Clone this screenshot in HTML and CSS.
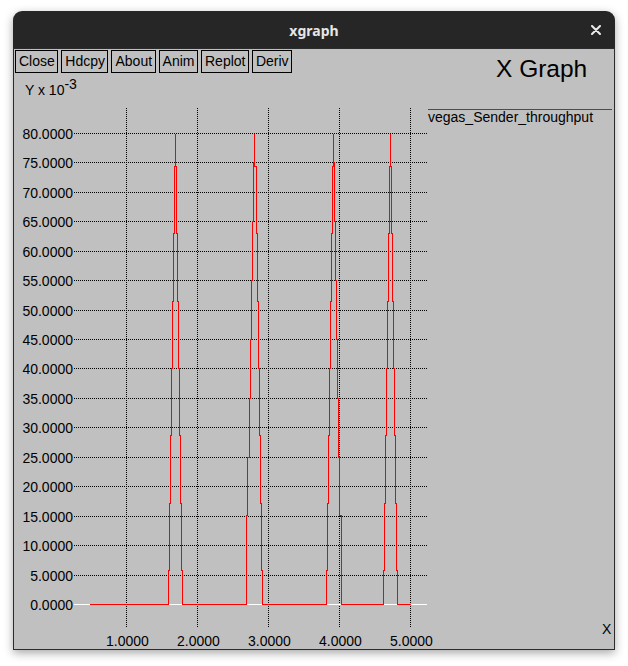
FILE: index.html
```html
<!DOCTYPE html>
<html>
<head>
<meta charset="utf-8">
<title>xgraph</title>
<link rel="stylesheet" href="styles.css">
</head>
<body>
<div class="window">
  <div class="titlebar">
    <span class="title">xgraph</span>
    <svg class="close" width="10" height="10" viewBox="0 0 10 10"><path d="M1 1 L9 9 M9 1 L1 9" stroke="#ececec" stroke-width="2" stroke-linecap="round"/></svg>
  </div>
  <div class="content">
    <svg class="plot" width="600" height="600" viewBox="14 49 600 600">
      <g class="hgrid" stroke="#000" stroke-width="1" stroke-dasharray="1 1" shape-rendering="crispEdges">
        <line x1="74" x2="427" y1="575.5" y2="575.5"/>
        <line x1="74" x2="427" y1="545.5" y2="545.5"/>
        <line x1="74" x2="427" y1="516.5" y2="516.5"/>
        <line x1="74" x2="427" y1="486.5" y2="486.5"/>
        <line x1="74" x2="427" y1="457.5" y2="457.5"/>
        <line x1="74" x2="427" y1="427.5" y2="427.5"/>
        <line x1="74" x2="427" y1="398.5" y2="398.5"/>
        <line x1="74" x2="427" y1="368.5" y2="368.5"/>
        <line x1="74" x2="427" y1="339.5" y2="339.5"/>
        <line x1="74" x2="427" y1="310.5" y2="310.5"/>
        <line x1="74" x2="427" y1="280.5" y2="280.5"/>
        <line x1="74" x2="427" y1="251.5" y2="251.5"/>
        <line x1="74" x2="427" y1="221.5" y2="221.5"/>
        <line x1="74" x2="427" y1="192.5" y2="192.5"/>
        <line x1="74" x2="427" y1="162.5" y2="162.5"/>
        <line x1="74" x2="427" y1="133.5" y2="133.5"/>
      </g>
      <g class="vgrid" stroke="#000" stroke-width="1" stroke-dasharray="1 1" shape-rendering="crispEdges">
        <line x1="126.5" x2="126.5" y1="108" y2="627"/>
        <line x1="197.5" x2="197.5" y1="108" y2="627"/>
        <line x1="268.5" x2="268.5" y1="108" y2="627"/>
        <line x1="339.5" x2="339.5" y1="108" y2="627"/>
        <line x1="410.5" x2="410.5" y1="108" y2="627"/>
      </g>
      <line x1="74" x2="427" y1="604.5" y2="604.5" stroke="#fff" stroke-width="1" shape-rendering="crispEdges"/>
      <path class="data" fill="none" stroke="#ff0000" stroke-width="1" shape-rendering="crispEdges"
        d="M90 604.5 H168.5 V570.5 H169.5 V503.5 H170.5 V435.5 H171.5 V368.5 H172.5 V301.5 H173.5 V233.5 H174.5 V166.5 H175.5 V133.5 V166.5 H176.5 V233.5 H177.5 V301.5 H178.5 V368.5 H179.5 V435.5 H180.5 V503.5 H181.5 V570.5 H182.5 V604.5
           H246.5 V515.5 H247.5 V457.5 H249.5 V398.5 H250.5 V339.5 H251.5 V280.5 H252.5 V221.5 H253.5 V162.5 H254.5 V133.5 V166.5 H256.5 V233.5 H257.5 V301.5 H258.5 V368.5 H259.5 V435.5 H260.5 V503.5 H261.5 V570.5 H262.5 V604.5
           H326.5 V570.5 H327.5 V503.5 H328.5 V435.5 H329.5 V368.5 H330.5 V301.5 H331.5 V233.5 H332.5 V166.5 H333.5 V133.5 V162.5 H334.5 V221.5 H335.5 V280.5 H336.5 V339.5 H337.5 V398.5 H338.5 V457.5 H339.5 V515.5 H341.5 V604.5
           H383.5 V570.5 H384.5 V503.5 H385.5 V435.5 H386.5 V368.5 H387.5 V301.5 H388.5 V233.5 H389.5 V166.5 H390.5 V133.5 V166.5 H391.5 V233.5 H392.5 V301.5 H393.5 V368.5 H394.5 V435.5 H395.5 V503.5 H396.5 V570.5 H397.5 V604.5 H410.5"/>
      <g class="ylabels" text-anchor="end">
        <text x="73" y="610">0.0000</text>
        <text x="73" y="581">5.0000</text>
        <text x="73" y="551">10.0000</text>
        <text x="73" y="522">15.0000</text>
        <text x="73" y="492">20.0000</text>
        <text x="73" y="463">25.0000</text>
        <text x="73" y="433">30.0000</text>
        <text x="73" y="404">35.0000</text>
        <text x="73" y="374">40.0000</text>
        <text x="73" y="345">45.0000</text>
        <text x="73" y="316">50.0000</text>
        <text x="73" y="286">55.0000</text>
        <text x="73" y="257">60.0000</text>
        <text x="73" y="227">65.0000</text>
        <text x="73" y="198">70.0000</text>
        <text x="73" y="168">75.0000</text>
        <text x="73" y="139">80.0000</text>
      </g>
      <g class="xlabels" text-anchor="middle">
        <text x="127.5" y="646">1.0000</text>
        <text x="198.5" y="646">2.0000</text>
        <text x="269.5" y="646">3.0000</text>
        <text x="340.5" y="646">4.0000</text>
        <text x="411.5" y="646">5.0000</text>
      </g>
      <text class="ylabel" x="25" y="95">Y x 10<tspan dy="-6">-3</tspan></text>
      <text class="gtitle" x="496" y="77">X Graph</text>
      <line x1="428" x2="612" y1="109.5" y2="109.5" stroke="#ff0000" stroke-width="1" shape-rendering="crispEdges"/>
      <text class="legend" x="428" y="122">vegas_Sender_throughput</text>
      <text class="xunit" x="602" y="634">X</text>
    </svg>
    <div class="buttons">
      <span class="btn">Close</span>
      <span class="btn">Hdcpy</span>
      <span class="btn">About</span>
      <span class="btn">Anim</span>
      <span class="btn">Replot</span>
      <span class="btn">Deriv</span>
    </div>
  </div>
</div>
</body>
</html>
```
FILE: styles.css
```css
html, body {
  margin: 0;
  padding: 0;
  background: #ffffff;
}

body {
  width: 628px;
  height: 666px;
  overflow: hidden;
}

.window {
  margin-left: 13px;
  margin-top: 11px;
  width: 602px;
  box-shadow: 0 3px 10px rgba(0, 0, 0, 0.35);
  border-radius: 9px 9px 0 0;
}

.titlebar {
  height: 37px;
  background: #262626;
  border-radius: 9px 9px 0 0;
  display: flex;
  align-items: center;
  justify-content: center;
  position: relative;
}

.title {
  font-family: "Noto Sans", "DejaVu Sans", sans-serif;
  font-weight: bold;
  font-size: 14px;
  color: #e6e6e6;
  margin-top: 1px;
}

.close {
  position: absolute;
  right: 14px;
  top: 14px;
}

.content {
  position: relative;
  height: 600px;
  width: 600px;
  border: 1px solid #2c2c2c;
  background: #c0c0c0;
  margin: 0;
  padding: 0;
}

.plot {
  position: absolute;
  left: 0;
  top: 0;
  display: block;
}

.plot text {
  font-family: "Liberation Sans", Arial, sans-serif;
  font-size: 14px;
  fill: #000;
}

.plot .gtitle {
  font-size: 24.5px;
}

.buttons {
  position: relative;
  display: flex;
  gap: 3px;
  padding: 1px 0 0 1px;
}

.btn {
  display: block;
  height: 23px;
  box-sizing: border-box;
  border: 1px solid #000;
  padding: 0 2.5px 0 3px;
  font-family: "Liberation Sans", Arial, sans-serif;
  font-size: 14px;
  line-height: 21px;
  color: #000;
  background: #c0c0c0;
}
```
